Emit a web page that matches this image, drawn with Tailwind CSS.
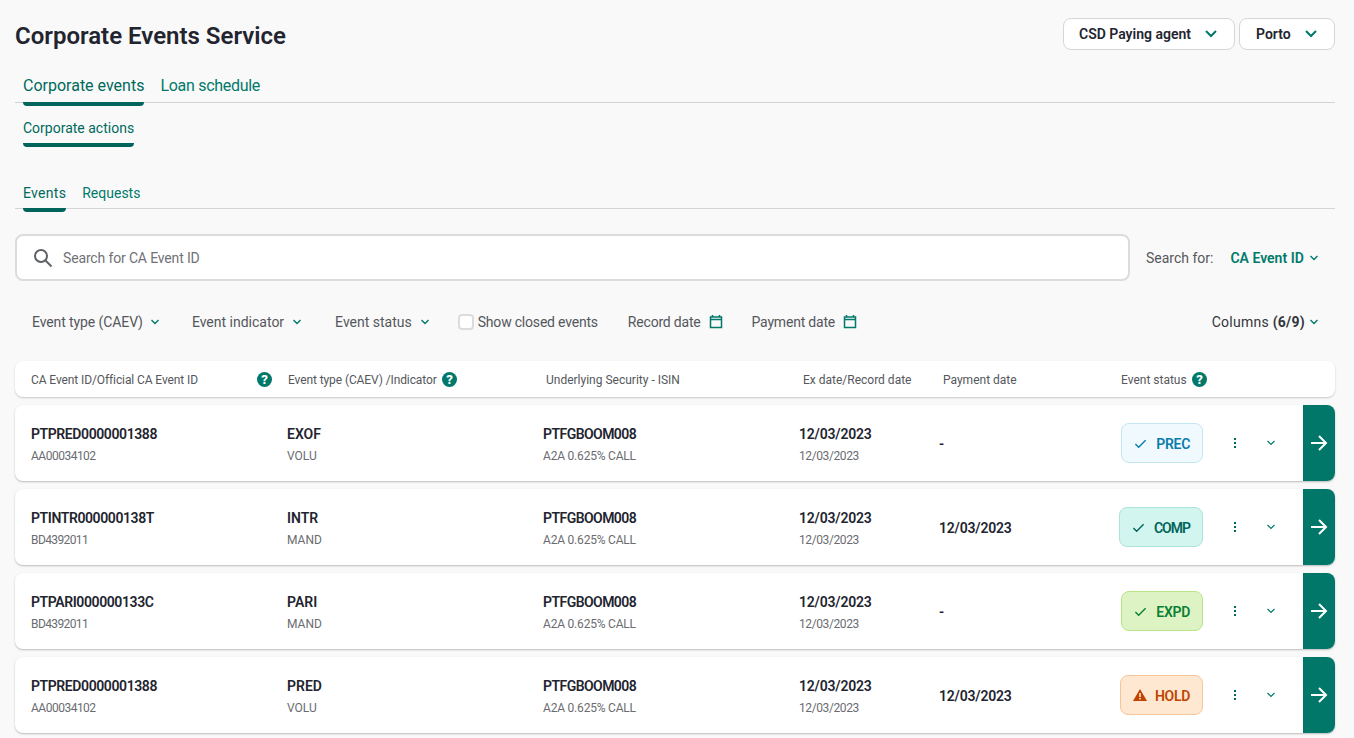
<!DOCTYPE html>
<html lang="en">
  <head>
    <meta charset="UTF-8" />
    <meta name="viewport" content="width=device-width, initial-scale=1.0" />
    <title>Corporate Events Service</title>
    <script src="https://cdn.jsdelivr.net/npm/@tailwindcss/browser@4"></script>
  </head>
  <body class="bg-[#f9f9f9] font-['Roboto',sans-serif] text-[#22242f] h-[738px] overflow-hidden">
    <div class="pl-[15px] pr-[19px] pt-[18px]">
      <!-- Title + selectors -->
      <header class="flex justify-between items-center h-[32px]">
        <h1 class="pt-[4px] text-[24px] font-semibold leading-[30px]">Corporate Events Service</h1>
        <div class="flex gap-[4px]">
          <button class="flex items-center justify-between w-[172px] h-[32px] pl-[15px] pr-[16px] bg-white border border-[#d6d6d6] rounded-[8px] text-[14px] font-semibold">
            CSD Paying agent
            <svg class="w-[14px] h-[14px] text-[#00796b]" viewBox="0 0 14 14" fill="none" stroke="currentColor" stroke-width="2"><path d="M2 4l5 5 5-5" /></svg>
          </button>
          <button class="flex items-center justify-between w-[96px] h-[32px] pl-[16px] pr-[16px] bg-white border border-[#d6d6d6] rounded-[8px] text-[14px] font-semibold">
            Porto
            <svg class="w-[14px] h-[14px] text-[#00796b]" viewBox="0 0 14 14" fill="none" stroke="currentColor" stroke-width="2"><path d="M2 4l5 5 5-5" /></svg>
          </button>
        </div>
      </header>

      <!-- Main tabs -->
      <nav class="flex gap-[16px] pl-[8px] h-[53px] border-b border-[#d4d4d4] pt-[24px] text-[16px] leading-[24px] text-[#00796b]">
        <a class="relative text-[#00695c]">Corporate events<span class="absolute left-0 right-0 top-[28px] h-[4px] bg-[#00645a] rounded-b-[4px]"></span></a>
        <a class="tracking-[-0.3px]">Loan schedule</a>
      </nav>

      <!-- Sub tab -->
      <nav class="flex pl-[8px] pt-[15px] h-[43px] text-[14px] leading-[20px] text-[#00695c]">
        <a class="relative">Corporate actions<span class="absolute left-0 right-0 top-[25px] h-[4px] bg-[#00645a] rounded-b-[4px]"></span></a>
      </nav>

      <!-- Events tabs -->
      <nav class="flex gap-[16px] pl-[8px] mt-[27px] h-[36px] border-b border-[#d4d4d4] pt-[10px] text-[14px] leading-[20px] text-[#00796b]">
        <a class="relative text-[#00695c] tracking-[0.3px]">Events<span class="absolute left-0 right-0 top-[25px] h-[4px] bg-[#00645a] rounded-b-[4px]"></span></a>
        <a>Requests</a>
      </nav>

      <!-- Search -->
      <div class="flex items-center mt-[25px]">
        <div class="flex items-center w-[1115px] h-[47px] bg-white border-2 border-[#dcdcdc] rounded-[8px] pl-[16px] text-[14px] text-[#6f7175]">
          <svg class="w-[20px] h-[20px] text-[#5f6165] mr-[10px]" viewBox="0 0 20 20" fill="none" stroke="currentColor" stroke-width="2"><circle cx="8" cy="8" r="6" /><path d="M12.5 12.5l6 6" /></svg>
          <span class="pt-[2px] tracking-[-0.15px]">Search for CA Event ID</span>
        </div>
        <span class="ml-[16px] pt-[2px] text-[14px] text-[#55575c]">Search for:</span>
        <span class="ml-[17px] pt-[2px] text-[14px] font-semibold text-[#00796b]">CA Event ID</span>
        <svg class="ml-[5px] w-[10px] h-[10px] text-[#00796b]" viewBox="0 0 10 10" fill="none" stroke="currentColor" stroke-width="1.4"><path d="M1.5 3l3.5 3.5L8.5 3" /></svg>
      </div>

      <!-- Filters -->
      <div class="flex items-center h-[20px] mt-[31px] pl-[17px] text-[14px] leading-[20px] text-[#55575c]">
        <span class="tracking-[-0.1px]">Event type (CAEV)</span>
        <svg class="ml-[7px] w-[10px] h-[10px] text-[#00796b]" viewBox="0 0 10 10" fill="none" stroke="currentColor" stroke-width="1.4"><path d="M1.5 3l3.5 3.5L8.5 3" /></svg>
        <span class="ml-[32px]">Event indicator</span>
        <svg class="ml-[8px] w-[10px] h-[10px] text-[#00796b]" viewBox="0 0 10 10" fill="none" stroke="currentColor" stroke-width="1.4"><path d="M1.5 3l3.5 3.5L8.5 3" /></svg>
        <span class="ml-[33px]">Event status</span>
        <svg class="ml-[8px] w-[10px] h-[10px] text-[#00796b]" viewBox="0 0 10 10" fill="none" stroke="currentColor" stroke-width="1.4"><path d="M1.5 3l3.5 3.5L8.5 3" /></svg>
        <span class="ml-[28px] w-[16px] h-[16px] bg-white border-2 border-[#dcdcdc] rounded-[4px]"></span>
        <span class="ml-[4px] tracking-[-0.2px]">Show closed events</span>
        <span class="ml-[30px] tracking-[-0.2px]">Record date</span>
        <svg class="ml-[8px] w-[14px] h-[16px] text-[#00796b]" viewBox="0 0 14 16" fill="none" stroke="currentColor" stroke-width="1.5"><rect x="1.5" y="3" width="11" height="10.5" /><path d="M1.5 5.5h11M3.5 1v2M10.5 1v2" /></svg>
        <span class="ml-[29px] tracking-[-0.2px]">Payment date</span>
        <svg class="ml-[8px] w-[14px] h-[16px] text-[#00796b]" viewBox="0 0 14 16" fill="none" stroke="currentColor" stroke-width="1.5"><rect x="1.5" y="3" width="11" height="10.5" /><path d="M1.5 5.5h11M3.5 1v2M10.5 1v2" /></svg>
        <span class="ml-auto text-[#33353c] tracking-[0.25px]">Columns <b class="font-bold">(6/9)</b></span>
        <svg class="ml-[4px] mr-[16px] w-[10px] h-[10px] text-[#00796b]" viewBox="0 0 10 10" fill="none" stroke="currentColor" stroke-width="1.4"><path d="M1.5 3l3.5 3.5L8.5 3" /></svg>
      </div>

      <!-- Table header -->
      <div class="flex items-center h-[36px] mt-[29px] bg-white rounded-[8px] shadow-[0_1px_2px_rgba(0,0,0,0.2)] text-[12px] text-[#55575c]">
        <div class="flex items-center w-[273px] pl-[16px] pr-[16px]">
          <span class="pt-[2px] tracking-[-0.1px]">CA Event ID/Official CA Event ID</span>
          <svg class="ml-auto w-[15px] h-[15px] text-[#00796b]" viewBox="0 0 16 16"><circle cx="8" cy="8" r="8" fill="currentColor" /><text x="8" y="13" text-anchor="middle" font-size="14" font-weight="800" fill="#fff">?</text></svg>
        </div>
        <div class="flex items-center w-[258px]">
          <span class="pt-[2px] tracking-[-0.1px]">Event type (CAEV) /Indicator</span>
          <svg class="ml-[5px] w-[15px] h-[15px] text-[#00796b]" viewBox="0 0 16 16"><circle cx="8" cy="8" r="8" fill="currentColor" /><text x="8" y="13" text-anchor="middle" font-size="14" font-weight="800" fill="#fff">?</text></svg>
        </div>
        <div class="w-[257px] pt-[2px]">Underlying Security - ISIN</div>
        <div class="w-[140px] pt-[2px]">Ex date/Record date</div>
        <div class="w-[178px] pt-[2px]">Payment date</div>
        <div class="flex items-center">
          <span class="pt-[2px]">Event status</span>
          <svg class="ml-[5px] w-[15px] h-[15px] text-[#00796b]" viewBox="0 0 16 16"><circle cx="8" cy="8" r="8" fill="currentColor" /><text x="8" y="13" text-anchor="middle" font-size="14" font-weight="800" fill="#fff">?</text></svg>
        </div>
      </div>

      <!-- Rows -->
      <div class="flex flex-col gap-[8px] mt-[8px]">
        <div class="flex items-center h-[76px] bg-white rounded-[8px] shadow-[0_1px_2px_rgba(0,0,0,0.25)]">
          <div class="w-[272px] pl-[16px] pt-[3px]"><p class="text-[14px] font-semibold leading-[20px] tracking-[-0.4px]">PTPRED0000001388</p><p class="mt-[3px] text-[12px] leading-[18px] text-[#6a6c71] tracking-[-0.5px]">AA00034102</p></div>
          <div class="w-[256px] pt-[3px]"><p class="text-[14px] font-semibold leading-[20px]">EXOF</p><p class="mt-[3px] text-[12px] leading-[18px] text-[#6a6c71]">VOLU</p></div>
          <div class="w-[256px] pt-[3px]"><p class="text-[14px] font-semibold leading-[20px] tracking-[-0.55px]">PTFGBOOM008</p><p class="mt-[3px] text-[12px] leading-[18px] text-[#6a6c71] tracking-[-0.2px]">A2A 0.625% CALL</p></div>
          <div class="w-[140px] pt-[3px]"><p class="text-[14px] font-semibold leading-[20px] tracking-[-0.2px]">12/03/2023</p><p class="mt-[3px] text-[12px] leading-[18px] text-[#6a6c71] tracking-[-0.4px]">12/03/2023</p></div>
          <div class="w-[140px] pt-[2px] text-[14px] font-semibold">-</div>
          <div class="flex-1 flex justify-end">
            <span class="flex items-center gap-[9px] h-[40px] pl-[12px] pr-[12px] bg-[#f0f9fd] border border-[#c4e6f3] rounded-[8px] text-[14px] font-semibold text-[#0a7bab]">
              <svg class="w-[13px] h-[13px]" viewBox="0 0 14 14" fill="none" stroke="currentColor" stroke-width="1.5"><path d="M1.5 7.5l3.5 3.5 7.5-7.5" /></svg>
              <span class="pt-[2px] tracking-[-0.3px]">PREC</span>
            </span>
          </div>
          <svg class="ml-[28px] w-[8px] h-[12px] text-[#00695c]" viewBox="0 0 8 12" fill="currentColor"><rect x="3" y="1" width="2" height="2" /><rect x="3" y="5" width="2" height="2" /><rect x="3" y="9" width="2" height="2" /></svg>
          <svg class="ml-[27px] w-[10px] h-[10px] text-[#00796b]" viewBox="0 0 10 10" fill="none" stroke="currentColor" stroke-width="1.2"><path d="M1.5 3l3.5 3.5L8.5 3" /></svg>
          <div class="flex items-center justify-center ml-[27px] w-[32px] h-full bg-[#01776a] rounded-r-[8px] text-white">
            <svg class="w-[18px] h-[18px]" viewBox="0 0 18 18" fill="none" stroke="currentColor" stroke-width="2"><path d="M1 9h15M9 2l7 7-7 7" /></svg>
          </div>
        </div>

        <div class="flex items-center h-[76px] bg-white rounded-[8px] shadow-[0_1px_2px_rgba(0,0,0,0.25)]">
          <div class="w-[272px] pl-[16px] pt-[3px]"><p class="text-[14px] font-semibold leading-[20px] tracking-[-0.4px]">PTINTR000000138T</p><p class="mt-[3px] text-[12px] leading-[18px] text-[#6a6c71] tracking-[-0.6px]">BD4392011</p></div>
          <div class="w-[256px] pt-[3px]"><p class="text-[14px] font-semibold leading-[20px]">INTR</p><p class="mt-[3px] text-[12px] leading-[18px] text-[#6a6c71]">MAND</p></div>
          <div class="w-[256px] pt-[3px]"><p class="text-[14px] font-semibold leading-[20px] tracking-[-0.55px]">PTFGBOOM008</p><p class="mt-[3px] text-[12px] leading-[18px] text-[#6a6c71] tracking-[-0.2px]">A2A 0.625% CALL</p></div>
          <div class="w-[140px] pt-[3px]"><p class="text-[14px] font-semibold leading-[20px] tracking-[-0.2px]">12/03/2023</p><p class="mt-[3px] text-[12px] leading-[18px] text-[#6a6c71] tracking-[-0.4px]">12/03/2023</p></div>
          <div class="w-[140px] pt-[2px] text-[14px] font-semibold tracking-[-0.2px]">12/03/2023</div>
          <div class="flex-1 flex justify-end">
            <span class="flex items-center gap-[9px] h-[40px] pl-[12px] pr-[12px] bg-[#d2f5f0] border border-[#ace3da] rounded-[8px] text-[14px] font-semibold text-[#00645a]">
              <svg class="w-[13px] h-[13px]" viewBox="0 0 14 14" fill="none" stroke="currentColor" stroke-width="1.5"><path d="M1.5 7.5l3.5 3.5 7.5-7.5" /></svg>
              <span class="pt-[2px] tracking-[-1px]">COMP</span>
            </span>
          </div>
          <svg class="ml-[28px] w-[8px] h-[12px] text-[#00695c]" viewBox="0 0 8 12" fill="currentColor"><rect x="3" y="1" width="2" height="2" /><rect x="3" y="5" width="2" height="2" /><rect x="3" y="9" width="2" height="2" /></svg>
          <svg class="ml-[27px] w-[10px] h-[10px] text-[#00796b]" viewBox="0 0 10 10" fill="none" stroke="currentColor" stroke-width="1.2"><path d="M1.5 3l3.5 3.5L8.5 3" /></svg>
          <div class="flex items-center justify-center ml-[27px] w-[32px] h-full bg-[#01776a] rounded-r-[8px] text-white">
            <svg class="w-[18px] h-[18px]" viewBox="0 0 18 18" fill="none" stroke="currentColor" stroke-width="2"><path d="M1 9h15M9 2l7 7-7 7" /></svg>
          </div>
        </div>

        <div class="flex items-center h-[76px] bg-white rounded-[8px] shadow-[0_1px_2px_rgba(0,0,0,0.25)]">
          <div class="w-[272px] pl-[16px] pt-[3px]"><p class="text-[14px] font-semibold leading-[20px] tracking-[-0.4px]">PTPARI000000133C</p><p class="mt-[3px] text-[12px] leading-[18px] text-[#6a6c71] tracking-[-0.6px]">BD4392011</p></div>
          <div class="w-[256px] pt-[3px]"><p class="text-[14px] font-semibold leading-[20px]">PARI</p><p class="mt-[3px] text-[12px] leading-[18px] text-[#6a6c71]">MAND</p></div>
          <div class="w-[256px] pt-[3px]"><p class="text-[14px] font-semibold leading-[20px] tracking-[-0.55px]">PTFGBOOM008</p><p class="mt-[3px] text-[12px] leading-[18px] text-[#6a6c71] tracking-[-0.2px]">A2A 0.625% CALL</p></div>
          <div class="w-[140px] pt-[3px]"><p class="text-[14px] font-semibold leading-[20px] tracking-[-0.2px]">12/03/2023</p><p class="mt-[3px] text-[12px] leading-[18px] text-[#6a6c71] tracking-[-0.4px]">12/03/2023</p></div>
          <div class="w-[140px] pt-[2px] text-[14px] font-semibold">-</div>
          <div class="flex-1 flex justify-end">
            <span class="flex items-center gap-[9px] h-[40px] pl-[12px] pr-[12px] bg-[#ddf3c4] border border-[#b9e486] rounded-[8px] text-[14px] font-semibold text-[#0b7f34]">
              <svg class="w-[13px] h-[13px]" viewBox="0 0 14 14" fill="none" stroke="currentColor" stroke-width="1.5"><path d="M1.5 7.5l3.5 3.5 7.5-7.5" /></svg>
              <span class="pt-[2px] tracking-[-0.3px]">EXPD</span>
            </span>
          </div>
          <svg class="ml-[28px] w-[8px] h-[12px] text-[#00695c]" viewBox="0 0 8 12" fill="currentColor"><rect x="3" y="1" width="2" height="2" /><rect x="3" y="5" width="2" height="2" /><rect x="3" y="9" width="2" height="2" /></svg>
          <svg class="ml-[27px] w-[10px] h-[10px] text-[#00796b]" viewBox="0 0 10 10" fill="none" stroke="currentColor" stroke-width="1.2"><path d="M1.5 3l3.5 3.5L8.5 3" /></svg>
          <div class="flex items-center justify-center ml-[27px] w-[32px] h-full bg-[#01776a] rounded-r-[8px] text-white">
            <svg class="w-[18px] h-[18px]" viewBox="0 0 18 18" fill="none" stroke="currentColor" stroke-width="2"><path d="M1 9h15M9 2l7 7-7 7" /></svg>
          </div>
        </div>

        <div class="flex items-center h-[76px] bg-white rounded-[8px] shadow-[0_1px_2px_rgba(0,0,0,0.25)]">
          <div class="w-[272px] pl-[16px] pt-[3px]"><p class="text-[14px] font-semibold leading-[20px] tracking-[-0.4px]">PTPRED0000001388</p><p class="mt-[3px] text-[12px] leading-[18px] text-[#6a6c71] tracking-[-0.5px]">AA00034102</p></div>
          <div class="w-[256px] pt-[3px]"><p class="text-[14px] font-semibold leading-[20px]">PRED</p><p class="mt-[3px] text-[12px] leading-[18px] text-[#6a6c71]">VOLU</p></div>
          <div class="w-[256px] pt-[3px]"><p class="text-[14px] font-semibold leading-[20px] tracking-[-0.55px]">PTFGBOOM008</p><p class="mt-[3px] text-[12px] leading-[18px] text-[#6a6c71] tracking-[-0.2px]">A2A 0.625% CALL</p></div>
          <div class="w-[140px] pt-[3px]"><p class="text-[14px] font-semibold leading-[20px] tracking-[-0.2px]">12/03/2023</p><p class="mt-[3px] text-[12px] leading-[18px] text-[#6a6c71] tracking-[-0.4px]">12/03/2023</p></div>
          <div class="w-[140px] pt-[2px] text-[14px] font-semibold tracking-[-0.2px]">12/03/2023</div>
          <div class="flex-1 flex justify-end">
            <span class="flex items-center gap-[8px] h-[40px] pl-[12px] pr-[12px] bg-[#ffe8d2] border border-[#f8c499] rounded-[8px] text-[14px] font-semibold text-[#c04400]">
              <svg class="w-[14px] h-[14px]" viewBox="0 0 14 14"><path fill="currentColor" fill-rule="evenodd" d="M7 1l7 12H0zM6.2 5v4h1.6V5zM6.2 10v1.5h1.6V10z" /></svg>
              <span class="pt-[2px] tracking-[-0.3px]">HOLD</span>
            </span>
          </div>
          <svg class="ml-[28px] w-[8px] h-[12px] text-[#00695c]" viewBox="0 0 8 12" fill="currentColor"><rect x="3" y="1" width="2" height="2" /><rect x="3" y="5" width="2" height="2" /><rect x="3" y="9" width="2" height="2" /></svg>
          <svg class="ml-[27px] w-[10px] h-[10px] text-[#00796b]" viewBox="0 0 10 10" fill="none" stroke="currentColor" stroke-width="1.2"><path d="M1.5 3l3.5 3.5L8.5 3" /></svg>
          <div class="flex items-center justify-center ml-[27px] w-[32px] h-full bg-[#01776a] rounded-r-[8px] text-white">
            <svg class="w-[18px] h-[18px]" viewBox="0 0 18 18" fill="none" stroke="currentColor" stroke-width="2"><path d="M1 9h15M9 2l7 7-7 7" /></svg>
          </div>
        </div>
      </div>
    </div>
  </body>
</html>
